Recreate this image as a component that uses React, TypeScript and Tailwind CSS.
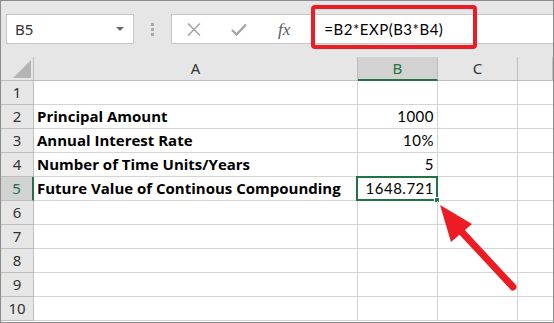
import React from 'react';

const COLS = ['A', 'B', 'C', ''];

const ROWS: { label?: string; value?: string }[] = [
  {},
  { label: 'Principal Amount', value: '1000' },
  { label: 'Annual Interest Rate', value: '10%' },
  { label: 'Number of Time Units/Years', value: '5' },
  { label: 'Future Value of Continous Compounding', value: '1648.721' },
  {},
  {},
  {},
  {},
  {},
];

const cellFont = { fontFamily: 'Lato, "Open Sans", sans-serif' };
const labelFont = { fontFamily: '"Open Sans", Lato, sans-serif' };
const uiFont = { fontFamily: '"Noto Sans", "Open Sans", sans-serif' };

export default function App() {
  return (
    <div className="relative w-[554px] h-[323px] overflow-hidden bg-white border border-[#8c8c8c]">
      {/* Formula bar */}
      <div className="h-[56px] bg-[#e6e6e6] flex items-center">
        <div
          className="ml-[5px] w-[128px] h-[30px] bg-white border border-[#c6c6c6] flex items-center justify-between pl-[8px] pr-[9px] text-[15px] text-[#333]"
          style={uiFont}
        >
          <span>B5</span>
          <svg width="8" height="4" viewBox="0 0 8 4">
            <path d="M0 0 L8 0 L4 4 Z" fill="#666" />
          </svg>
        </div>
        <div className="w-[37px] flex flex-col items-center gap-[2px]">
          <div className="w-[3px] h-[3px] bg-[#a8a8a8]" />
          <div className="w-[3px] h-[3px] bg-[#a8a8a8]" />
          <div className="w-[3px] h-[3px] bg-[#a8a8a8]" />
        </div>
        <div className="flex-1 h-[30px] bg-white border border-[#c6c6c6] border-r-0 flex items-center">
          <svg className="ml-[15px]" width="14" height="13" viewBox="0 0 14 13">
            <path d="M1 0.5 L13 12.5 M13 0.5 L1 12.5" stroke="#a6a6a6" strokeWidth="1.6" />
          </svg>
          <svg className="ml-[30px]" width="16" height="13" viewBox="0 0 16 13">
            <path d="M1 7 L5.5 11.5 L15 1.5" stroke="#a6a6a6" strokeWidth="2.4" fill="none" />
          </svg>
          <span
            className="ml-[31px] text-[17px] italic text-[#5a5a5a] leading-none"
            style={{ fontFamily: '"Liberation Serif", serif' }}
          >
            fx
          </span>
          <span className="ml-[34px] text-[15px] tracking-[0.5px] text-black" style={cellFont}>
            =B2*EXP(B3*B4)
          </span>
        </div>
      </div>

      {/* Grid */}
      <div className="grid grid-cols-[33px_324px_80px_80px_1fr] auto-rows-[24px]">
        <div className="bg-[#e6e6e6] border-r border-b border-[#bdbdbd] flex items-end justify-end pr-[2px] pb-[2px]">
          <svg width="18" height="18" viewBox="0 0 18 18">
            <path d="M18 0 L18 18 L0 18 Z" fill="#b4b4b4" />
          </svg>
        </div>
        {COLS.map((c) =>
          c === 'B' ? (
            <div
              key={c}
              className="bg-[#d2d2d2] border-r border-[#bdbdbd] border-b-2 border-b-[#217346] flex items-center justify-center text-[15px] text-[#217346]"
              style={uiFont}
            >
              {c}
            </div>
          ) : (
            <div
              key={c || 'd'}
              className="bg-[#e6e6e6] border-r border-b border-[#bdbdbd] flex items-center justify-center text-[15px] text-[#333]"
              style={uiFont}
            >
              {c}
            </div>
          )
        )}

        {ROWS.map((r, i) => {
          const sel = i === 4;
          return (
            <React.Fragment key={i}>
              <div
                className={
                  sel
                    ? 'bg-[#d2d2d2] border-b border-[#bdbdbd] border-r-2 border-r-[#217346] flex items-center justify-center text-[15px] text-[#217346]'
                    : 'bg-[#e6e6e6] border-r border-b border-[#bdbdbd] flex items-center justify-center text-[15px] text-[#333]'
                }
                style={uiFont}
              >
                {i + 1}
              </div>
              <div
                className="border-r border-b border-[#d4d4d4] flex items-center pl-[3px] text-[15px] font-bold text-black whitespace-nowrap"
                style={labelFont}
              >
                {r.label}
              </div>
              <div
                className="relative border-r border-b border-[#d4d4d4] flex items-center justify-end pr-[3px] text-[15px] tracking-[0.5px] text-black"
                style={cellFont}
              >
                {r.value}
                {sel && (
                  <>
                    <div className="absolute -left-[2px] -top-[1px] -right-[1px] -bottom-[1px] border-2 border-[#217346]" />
                    <div className="absolute -right-[3px] -bottom-[3px] w-[6px] h-[6px] bg-[#217346] border border-white" />
                  </>
                )}
              </div>
              <div className="border-r border-b border-[#d4d4d4]" />
              <div className="border-b border-[#d4d4d4]" />
            </React.Fragment>
          );
        })}
      </div>

      {/* Annotations */}
      <div className="absolute left-[310px] top-[4px] w-[166px] h-[44px] border-[4px] border-[#ed1c24] rounded-[4px]" />
      <svg className="absolute left-0 top-0" width="554" height="323" viewBox="0 0 554 323">
        <path d="M512 286 L458 228" stroke="#ed1c24" strokeWidth="7" strokeLinecap="round" />
        <path d="M439 204 L471 223 L450 241 Z" fill="#ed1c24" />
      </svg>
    </div>
  );
}
